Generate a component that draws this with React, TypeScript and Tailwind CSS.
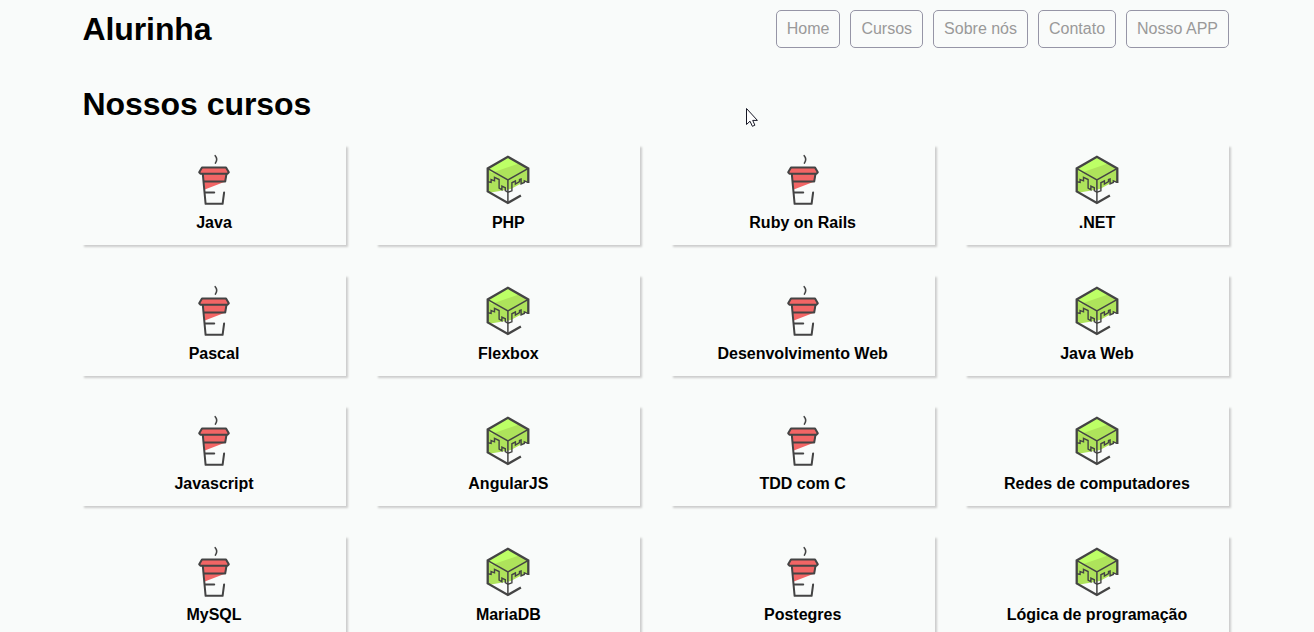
const links = ['Home', 'Cursos', 'Sobre nós', 'Contato', 'Nosso APP'];

const courses = [
  'Java', 'PHP', 'Ruby on Rails', '.NET',
  'Pascal', 'Flexbox', 'Desenvolvimento Web', 'Java Web',
  'Javascript', 'AngularJS', 'TDD com C', 'Redes de computadores',
  'MySQL', 'MariaDB', 'Postegres', 'Lógica de programação',
];

function CupIcon() {
  return (
    <svg className="block h-[62px] w-[50px]" viewBox="-1 -0.5 50 62" fill="none" stroke="#444" strokeWidth="2" strokeLinecap="round" strokeLinejoin="round">
      <path d="M12.2 18.8 L9 24.5 H38.8 L36 18.8 Z M13 25 H37 L35.5 33 L14.8 41 Z" fill="#f26565" stroke="none" />
      <path d="M25.2 7.2 C27.2 9.4 27.2 11.9 25.4 14.6" strokeWidth="1.6" />
      <path d="M12 18.9 H36 L38.8 23.8 L37.6 25.2 H10.4 L9.2 23.8 Z" />
      <path d="M12.8 25.4 L15.6 55.3 H32.6 L34.1 44" />
      <path d="M36.5 25.4 L35.2 33 H14" />
      <path d="M15 44 H24.2" />
    </svg>
  );
}

function CubeIcon() {
  return (
    <svg className="block h-[62px] w-[56px]" viewBox="0.1 0 56 62" fill="none" stroke="#444" strokeLinejoin="miter">
      <path d="M28 8.8 L48.5 20.5 V33 L41.2 35.5 L31 41 L8 45 V20.5 Z" fill="#aee35b" stroke="none" />
      <path d="M28 9 L39 15.5 L11.5 25 L8 20.5 Z" fill="#bdff66" stroke="none" />
      <path d="M48.4 35 V20.4 L28 8.8 L7.8 20.4 V43.4 L28 54.9 L41 47.4" strokeWidth="2.3" />
      <path d="M8 20.6 L28 32 L48 20.6 M28 32 V54" strokeWidth="1.5" />
      <path d="M8 33.8 L11.2 34.5 V31.6 L14.6 32.8 V29.4 L19.2 31.5 V40.2 L22 41.8 V38.2 L25.4 39.8 V42.6 L28 44.2 L32 42.8 V34.8 L35.5 33 V36 L39.6 33.5 V31.6 L41.2 31 V36 L44.4 34.5 V32.8 L48 34.4" strokeWidth="1.4" />
    </svg>
  );
}

function Pointer() {
  return (
    <svg className="pointer-events-none absolute left-[745px] top-[107px] h-[21px] w-[14px]" viewBox="0 0 14 21">
      <path d="M1.5 1.5 V17.5 L5 14.2 L7.4 19.3 L9.9 18.2 L7.7 13.4 H12.4 Z" fill="#fff" stroke="#171725" strokeWidth="1" />
    </svg>
  );
}

export default function App() {
  return (
    <div className="relative h-[632px] overflow-hidden bg-[#f9fbfa] pl-[82.5px] font-['Liberation_Sans',Arial,sans-serif] text-black">
      <header className="flex h-[58px] w-[1146.5px] items-center justify-between">
        <h1 className="text-[32px] leading-[37px] font-bold tracking-[-0.1px]">Alurinha</h1>
        <nav className="flex gap-[10px]">
          {links.map((link) => (
            <a key={link} href="#" className="flex h-[38px] items-center rounded-[5px] border border-[#9695a6] px-[10px] text-base text-[#999]">
              {link}
            </a>
          ))}
        </nav>
      </header>
      <main>
        <h2 className="pt-[28px] text-[32px] leading-[37px] font-bold tracking-[-0.05px]">Nossos cursos</h2>
        <ul className="-ml-[0.5px] mt-[21.5px] grid w-[1147px] grid-cols-[repeat(4,264px)] justify-between gap-y-[30px]">
          {courses.map((course, index) => (
            <li key={course} className="flex h-[100.6px] flex-col items-center pt-[3.5px] shadow-[2px_2px_2px_#ccc]">
              {index % 2 === 0 ? <CupIcon /> : <CubeIcon />}
              <h3 className="mt-[4px] text-base leading-[18px] font-bold">{course}</h3>
            </li>
          ))}
        </ul>
      </main>
      <Pointer />
    </div>
  );
}
